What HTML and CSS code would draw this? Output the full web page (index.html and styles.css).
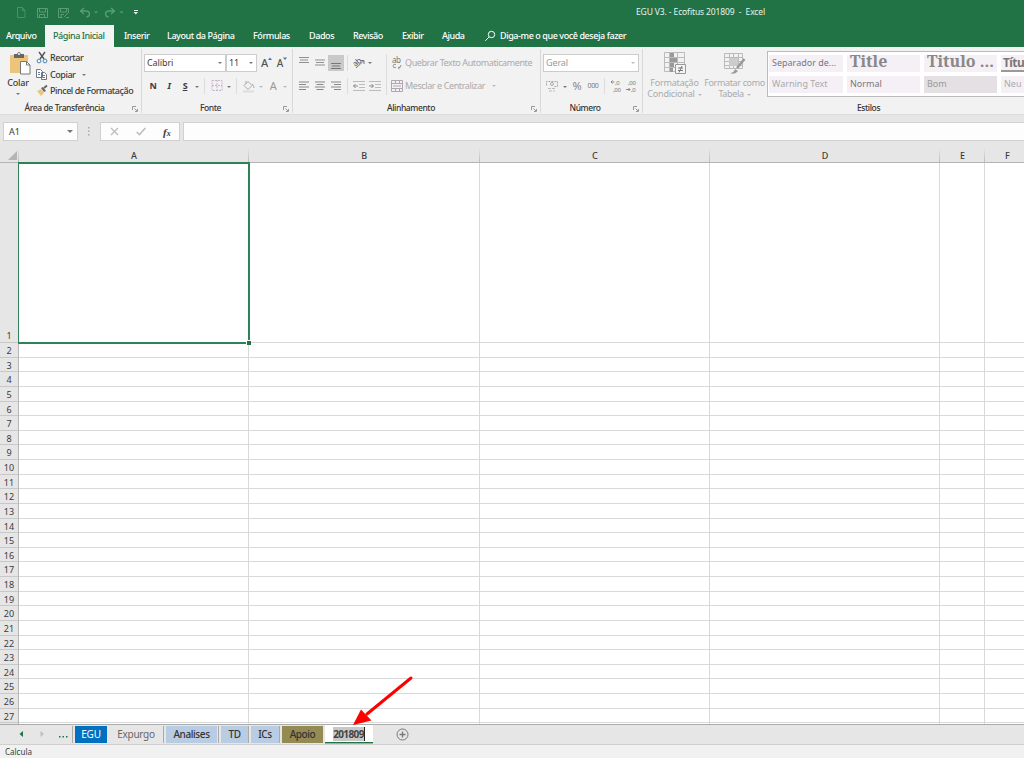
FILE: index.html
```html
<!DOCTYPE html>
<html lang="pt-BR">
<head>
    <meta charset="utf-8">
    <title>EGU V3. - Ecofitus 201809 - Excel</title>
    <link rel="stylesheet" href="styles.css">
</head>
<body>
    <header class="titlebar">
        <svg class="quick" width="145" height="24" fill="none" stroke="#5b9c78">
            <path d="M17.500 7.500h5l2.500 3v7h-7.500zM22.500 7.500v3h2.500" stroke="#4b9069"/>
            <path d="M37.500 8.500h10v9h-10zM39.500 8.500v3.500h6v-3.500M39.500 17.500v-3h5v3"/>
            <path d="M58.500 8.500h10v4M58.500 8.500v9h4M60.500 8.500v3.500h6v-3.500M61 17.500v-3h3M64 17l5-5M66 17.500h3"/>
            <path d="M84 8l-3.500 3 3.500 3M80.500 11h6q3 .5 3 3t-3 3" stroke-width="1.300"/>
            <path d="M111 8l3.500 3-3.500 3M114.500 11h-6q-3 .5-3 3t3 3" stroke-width="1.300"/>
            <path d="M94 11.500h4l-2 2zM119.500 11.500h4l-2 2z" fill="#5b9c78" stroke="none"/>
            <path d="M134 10h4v1h-4zM133.500 12h4.500l-2.200 2.500z" fill="#e3f0e8" stroke="none"/>
        </svg>
        <span class="doc-name">EGU V3. - Ecofitus 201809 &nbsp;- &nbsp;Excel</span>
    </header>

    <nav class="menu">
        <span>Arquivo</span>
        <span class="current">Página Inicial</span>
        <span>Inserir</span>
        <span>Layout da Página</span>
        <span>Fórmulas</span>
        <span>Dados</span>
        <span>Revisão</span>
        <span>Exibir</span>
        <span>Ajuda</span>
        <svg width="12" height="12" fill="none" stroke="#fff"><circle cx="6.500" cy="4.500" r="3.200"/><path d="M4 7L.3 10.800"/></svg>
        <span class="tell">Diga-me o que você deseja fazer</span>
    </nav>

    <section class="ribbon">
        <div class="group clipboard">
            <div class="tools">
                <div class="paste">
                    <svg width="24" height="25">
                        <path d="M1 3h18v18H1z" fill="#edc57a"/>
                        <path d="M5 2h3q2-4 4 0h3v4H5z" fill="#666"/>
                        <circle cx="10" cy="2" r="1" fill="#fff"/>
                        <path d="M11.500 9.500h6l3.500 3.500v9h-9.500z" fill="#fff" stroke="#777"/>
                        <path d="M17.500 9.500v3.500h3.500" fill="none" stroke="#777"/>
                    </svg>
                    <span>Colar</span>
                    <i class="caret"></i>
                </div>
                <ul class="clip-list">
                    <li>
                        <svg width="13" height="12" fill="none"><path d="M3 0l5 7M9 0L4 7" stroke="#555" stroke-width="1.400"/><circle cx="3" cy="9" r="1.900" stroke="#4a86bd"/><circle cx="9" cy="9" r="1.900" stroke="#4a86bd"/></svg>
                        <span>Recortar</span>
                    </li>
                    <li>
                        <svg width="13" height="12" fill="#fff" stroke="#777"><path d="M.5 .5h4l2 2v6h-6zM5.500 3.500h3l2 2v5h-5z"/><path d="M2 3.500h2M2 5.500h2M7 6.500h2M7 8.500h2" stroke="#4a86bd"/></svg>
                        <span>Copiar</span><i class="caret"></i>
                    </li>
                    <li>
                        <svg width="13" height="12"><path d="M1 6l4-2 3 4-3 3z" fill="#edc57a"/><path d="M5 3l2-1 3 4-2 1z" fill="#666"/><path d="M8 3l3-2.500" stroke="#666" stroke-width="2"/></svg>
                        <span>Pincel de Formatação</span>
                    </li>
                </ul>
            </div>
            <footer>Área de Transferência</footer>
            <svg class="launch" width="6" height="6"><use href="#launcher"/></svg>
        </div>

        <div class="group font">
            <div class="line">
                <div class="select name"><span>Calibri</span><i class="caret"></i></div>
                <div class="select size"><span>11</span><i class="caret"></i></div>
                <span class="grow">A</span><svg class="tick" width="5" height="12"><path d="M0 3l2-2.500L4 3z" fill="#3f77b5"/></svg>
                <span class="shrink">A</span><svg class="tick" width="5" height="12"><path d="M0 .5h4L2 3z" fill="#3f77b5"/></svg>
            </div>
            <div class="line second">
                <b class="slot">N</b><b class="slot italic">I</b><b class="slot under">S</b><span class="slot w8"><i class="caret"></i></span>
                <i class="bar"></i>
                <svg class="slot" width="12" height="12" fill="none" stroke="#c9b5cb"><path d="M3 .5h10v10H3zM8 0v11M3 5.500h10" stroke-dasharray="2 1"/></svg>
                <span class="slot w8"><i class="caret"></i></span>
                <i class="bar"></i>
                <svg class="slot" width="16" height="13" fill="none" stroke="#aaa"><path d="M3 5.500l4-4 4 4-4 4zM5 1v3M11 4q2 1 2 4"/><path d="M2 11.500h11" stroke="#e3d9e4" stroke-width="2"/></svg>
                <span class="slot w8 pale"><i class="caret"></i></span>
                <span class="slot glyph-a">A</span>
                <span class="slot w8 pale"><i class="caret"></i></span>
            </div>
            <footer>Fonte</footer>
            <svg class="launch" width="6" height="6"><use href="#launcher"/></svg>
        </div>

        <div class="group align">
            <div class="tools">
                <div class="align-left">
                    <div class="line">
                        <svg class="slot" width="16" height="16" stroke="#909090"><path d="M3 2.500h10M4 5h8M3 7.500h10"/></svg>
                        <svg class="slot" width="16" height="16" stroke="#909090"><path d="M3 5h10M4 7.500h8M3 10h10"/></svg>
                        <svg class="slot on" width="16" height="16" stroke="#777"><path d="M3 8.500h10M4 11h8M3 13.500h10"/></svg>
                        <i class="bar"></i>
                        <svg class="slot orient" width="16" height="14" fill="none" stroke="#777"><path d="M4 12L12 4.500M8.500 4.500h3.500v3.500"/><text x="1" y="9" font-size="8" fill="#555" stroke="none" transform="rotate(-40 5 7)">ab</text></svg>
                        <i class="caret"></i>
                    </div>
                    <div class="line second">
                        <svg class="slot" width="16" height="12" stroke="#888"><path d="M3 2h10M3 4.500h7M3 7h10M3 9.500h7"/></svg>
                        <svg class="slot" width="16" height="12" stroke="#888"><path d="M3 2h10M4.500 4.500h7M3 7h10M4.500 9.500h7"/></svg>
                        <svg class="slot" width="16" height="12" stroke="#888"><path d="M3 2h10M6 4.500h7M3 7h10M6 9.500h7"/></svg>
                        <i class="bar"></i>
                        <svg class="slot" width="16" height="12" stroke="#bbb" fill="none"><path d="M1 1.500h12M7 4.500h6M7 7.500h6M1 10.500h12"/><path d="M6 6H1.500M3.500 4l-2 2 2 2" stroke="#888"/></svg>
                        <svg class="slot" width="16" height="12" stroke="#bbb" fill="none"><path d="M1 1.500h12M7 4.500h6M7 7.500h6M1 10.500h12"/><path d="M1 6h4.500M3.500 4l2 2-2 2" stroke="#888"/></svg>
                    </div>
                </div>
                <div class="align-right">
                    <div class="line">
                        <svg width="13" height="14" fill="none" stroke="#999"><text x="1" y="7" font-size="8" fill="#777" stroke="none">ab</text><path d="M5 8.500q-3-1-3 1.500t3 1.500M7 12q3 0 3-3M8.500 10.500L7 12l1.500 1"/></svg>
                        <span class="wrap-text">Quebrar Texto Automaticamente</span>
                    </div>
                    <div class="line second">
                        <svg width="13" height="13" fill="none" stroke="#b0a5b2"><path d="M.5 .5h11v11H.5zM0 3.500h12M0 8.500h12M4.500 0v3M8.500 0v3M4.500 9v3M8.500 9v3M2 6h8"/></svg>
                        <span class="merge">Mesclar e Centralizar</span><i class="caret pale"></i>
                    </div>
                </div>
            </div>
            <footer>Alinhamento</footer>
            <svg class="launch" width="6" height="6"><use href="#launcher"/></svg>
        </div>

        <div class="group number">
            <div class="line"><div class="select format"><span>Geral</span><i class="caret pale"></i></div></div>
            <div class="line second">
                <svg class="slot" width="14" height="13" fill="none" stroke="#aaa"><path d="M1.500 5.500v-4h11v5h-4" stroke-dasharray="2 1"/><circle cx="7" cy="4" r="1.500"/><path d="M3 8.500h7M4 11h6" stroke="#bbb" stroke-dasharray="3 1"/></svg>
                <span class="slot w8"><i class="caret"></i></span>
                <span class="slot percent">%</span>
                <span class="slot zeros">000</span>
                <i class="bar"></i>
                <svg class="slot" width="16" height="14" fill="#777"><text x="6" y="5.500">,0</text><text x="4" y="13">,00</text><path d="M2 3h3.500M3.500 1.500L2 3l1.500 1.500" stroke="#888" fill="none"/></svg>
                <svg class="slot" width="16" height="14" fill="#777"><text x="3" y="5.500">,00</text><text x="6" y="13">,0</text><path d="M1 10.500h4M3.500 9L5 10.500 3.500 12" stroke="#888" fill="none"/></svg>
            </div>
            <footer>Número</footer>
            <svg class="launch" width="6" height="6"><use href="#launcher"/></svg>
        </div>

        <div class="group styles">
            <div class="tools">
                <div class="big">
                    <svg width="24" height="24" fill="none" stroke="#bbb"><path d="M1.500 1.500h20v19h-20zM1 6.500h20M1 11.500h20M1 16.500h20M6.500 1v20M14.500 1v20"/><path d="M7 2h4v4H7zM7 7h7v4H7zM7 12h4v4H7zM7 17h3v4H7z" fill="#999" stroke="none"/><path d="M12.500 13.500h10v9h-10z" fill="#f5f5f5" stroke="#999"/><path d="M15 17h5M15 19.500h5M19 15l-3 6.500" stroke="#777"/></svg>
                    <span>Formatação</span>
                    <span>Condicional<i class="caret pale"></i></span>
                </div>
                <div class="big table">
                    <svg width="24" height="24" fill="none" stroke="#bbb"><path d="M1.500 2.500h18v15h-18zM1 6.500h18M1 10.500h18M1 14.500h18M6.500 2v15M10.500 2v15M15.500 2v15"/><path d="M6 7h9v8H6z" fill="#ccc" stroke="none"/><path d="M21.500 8L14 17" stroke="#999" stroke-width="2.500"/><path d="M7 22q4 0 5-4l3 2q-3 4-8 2z" fill="#999" stroke="none"/></svg>
                    <span>Formatar como</span>
                    <span>Tabela<i class="caret pale"></i></span>
                </div>
                <div class="gallery">
                    <span class="sep-style">Separador de...</span>
                    <span class="title-style">Title</span>
                    <span class="title-style">Titulo ...</span>
                    <span class="heading">Títu</span>
                    <span class="faint">Warning Text</span>
                    <span>Normal</span>
                    <span class="good">Bom</span>
                    <span class="faint">Neu</span>
                </div>
            </div>
            <footer>Estilos</footer>
        </div>
    </section>

    <section class="formula">
        <div class="box cell-name"><span>A1</span><i class="caret"></i></div>
        <svg class="dots" width="2" height="9" fill="#aaa"><path d="M0 0h1.500v1.500H0zM0 3.500h1.500V5H0zM0 7h1.500v1.500H0z"/></svg>
        <div class="box actions">
            <svg width="9" height="9" stroke="#bbb" stroke-width="1.300"><path d="M1 1l7 7M8 1L1 8"/></svg>
            <svg width="10" height="9" fill="none" stroke="#bbb" stroke-width="1.600"><path d="M.8 5l2.700 2.700L9.300 1"/></svg>
            <em>f<small>x</small></em>
        </div>
        <div class="box input"></div>
    </section>

    <main class="sheet">
        <div class="cols">
            <span class="corner"><svg width="9" height="9"><path d="M9 0v9H0z" fill="#b4b4b4"/></svg></span>
            <span>A</span><span>B</span><span>C</span><span>D</span><span>E</span><span>F</span>
        </div>
        <div class="body">
            <div class="rows" id="rows"></div>
            <div class="cells">
                <div class="column selected"><i class="handle"></i></div>
                <div class="column"></div>
                <div class="column"></div>
                <div class="column"></div>
                <div class="column"></div>
                <div class="column"></div>
            </div>
        </div>
    </main>

    <nav class="tabs">
        <svg class="arrows" width="75" height="19"><path d="M23 6v6l-3.500-3z" fill="#217346"/><path d="M40.500 6v6l3.500-3z" fill="#bfbfbf"/><path d="M59 11h1.500v1.500H59zM62.500 11H64v1.500h-1.500zM66 11h1.500v1.500H66z" fill="#217346"/></svg>
        <span class="tab blue">EGU</span>
        <span class="tab plain">Expurgo</span>
        <span class="tab light">Analises</span>
        <span class="tab light">TD</span>
        <span class="tab light">ICs</span>
        <span class="tab olive">Apoio</span>
        <span class="tab editing"><mark>201809</mark></span>
        <svg class="add" width="13" height="13" fill="none" stroke="#777"><circle cx="6.500" cy="6.500" r="5.500"/><path d="M3.500 6.500h6M6.500 3.500v6" stroke-width="1.300"/></svg>
    </nav>
    <footer class="status">Calcula</footer>

    <svg class="pointer" width="64" height="52">
        <path d="M59 3L15 39" stroke="#fe0000" stroke-width="3" stroke-linecap="round"/>
        <path d="M1 50l8-15.500L19.500 45.500z" fill="#fe0000"/>
    </svg>

    <svg width="0" height="0" class="defs">
        <symbol id="launcher"><path d="M.5 4V.5H4M2.500 2.500L5 5M5.500 3v2.500H3" fill="none" stroke="#999"/></symbol>
    </svg>

    <script>
        var rows = document.getElementById('rows');
        for (var i = 1; i <= 27; i++) {
            var row = document.createElement('span');
            row.textContent = i;
            rows.appendChild(row);
        }
    </script>
</body>
</html>
```

FILE: styles.css
```css
*, *::before {
    box-sizing: border-box;
}
body {
    margin: 0;
    width: 1024px;
    height: 758px;
    overflow: hidden;
    position: relative;
    background: #e6e6e6;
    color: #3c3c3c;
    font: 9px/12px "Noto Sans", "Open Sans", sans-serif;
}
svg {
    display: block;
    flex: none;
    overflow: visible;
}
span {
    white-space: nowrap;
}
ul {
    margin: 0;
    padding: 0;
    list-style: none;
}
.defs {
    position: absolute;
}
.caret {
    display: inline-block;
    flex: none;
    width: 0;
    height: 0;
    border: 2px solid transparent;
    border-top: 2.500px solid #777;
    border-bottom: 0;
}
.pale, .pale .caret {
    border-top-color: #bbb;
}

/* title and menu */
.titlebar {
    height: 25px;
    background: #217346;
    display: flex;
}
.doc-name {
    margin-left: 491px;
    line-height: 24px;
    font-size: 8.500px;
    color: #e8f2ec;
    letter-spacing: -.12px;
}
.menu {
    height: 22px;
    background: #217346;
    color: #fff;
    display: grid;
    grid-template-columns: 39px 79px 43px 86px 56px 44px 49px 40px 43px 15px 1fr;
    padding-left: 6px;
    line-height: 21px;
    font-weight: 500;
    letter-spacing: -.42px;
}
.menu svg {
    margin-top: 5px;
}
.menu .current {
    background: #f3f3f3;
    color: #217346;
    width: 69px;
    padding-left: 8px;
}

/* ribbon */
.ribbon {
    height: 68px;
    background: #f2f2f2;
    border-bottom: 1px solid #dcdcdc;
    display: flex;
    letter-spacing: -.35px;
}
.group {
    position: relative;
    height: 64px;
    margin-top: 2px;
    border-right: 1px solid #d8d8d8;
    flex: none;
}
.group footer {
    position: absolute;
    bottom: -1px;
    width: 100%;
    text-align: center;
    color: #333;
    font-size: 8.500px;
    font-weight: 500;
    letter-spacing: -.4px;
}
.launch {
    position: absolute;
    right: 3px;
    bottom: 1px;
}
.tools, .line {
    display: flex;
}
.line {
    height: 18px;
    align-items: center;
}
.second {
    margin-top: 5px;
}
.slot {
    flex: none;
    width: 16px;
    text-align: center;
    line-height: 12px;
}
.bar {
    width: 1px;
    height: 16px;
    margin: 0 4px 0 3px;
    background: #dcdcdc;
}
.w8 { width: 8px; }
.slot .caret {
    vertical-align: middle;
}
.select {
    height: 18px;
    background: #fff;
    border: 1px solid #ccc;
    display: flex;
    align-items: center;
    justify-content: space-between;
    padding: 0 3px 0 2px;
    letter-spacing: -.1px;
}

.clipboard {
    width: 142px;
    font-weight: 500;
}
.clipboard footer {
    width: 129px;
}
.paste {
    width: 36px;
    padding: 3px 0 0 9px;
    text-align: center;
}
.paste span {
    display: block;
    margin: 0 0 0 -9px;
    letter-spacing: -.2px;
}
.paste .caret {
    display: block;
    margin: 4px 0 0 7px;
}
.clip-list {
    padding-top: 1px;
    letter-spacing: -.46px;
}
.clip-list li {
    height: 16.500px;
    display: flex;
    align-items: center;
}
.clip-list span {
    margin-left: 1px;
}
.clip-list .caret {
    margin-left: 7px;
}

.font {
    width: 151px;
    padding: 5px 0 0 2px;
}
.font .second {
    padding-left: 1px;
}
.font footer {
    width: 137px;
    left: 0;
}
.name { width: 82px; }
.size { width: 31px; }
.grow, .shrink {
    font-size: 11px;
    font-weight: 500;
    margin-left: 4px;
    color: #555;
}
.shrink {
    font-size: 10px;
}
.italic { font-style: italic; }
.under { text-decoration: underline; }
.glyph-a {
    font-size: 11px;
    color: #999;
}

.align {
    width: 248px;
}
.align footer {
    width: 236px;
}
.align-left {
    width: 93px;
    padding: 5px 0 0 3px;
}
.align-right {
    margin-top: 5px;
    height: 41px;
    border-left: 1px solid #dcdcdc;
    padding-left: 4px;
    color: #aaa;
    letter-spacing: -.4px;
}
.align-right span {
    margin-left: 1px;
}
.align-right .caret {
    margin-left: 7px;
}
.on {
    background: #c9c9c9;
}

.number {
    width: 102px;
    padding: 5px 0 0 2px;
}
.number .second {
    padding-left: 2px;
}
.number footer {
    width: 88px;
    left: 0;
}
.format {
    width: 96px;
    color: #999;
}
.percent {
    font-size: 11px;
    color: #888;
}
.zeros {
    font-size: 7px;
    color: #777;
}
.number text {
    font-size: 6px;
    letter-spacing: -.3px;
}

.styles {
    width: 381px;
    border: 0;
}
.styles footer {
    width: 451px;
}
.big {
    width: 63px;
    display: flex;
    flex-direction: column;
    align-items: center;
    padding-top: 2px;
    color: #aaa;
    line-height: 11px;
    letter-spacing: -.2px;
}
.big.table {
    width: 61px;
    margin-left: -2px;
    margin-right: 2px;
    letter-spacing: -.35px;
}
.big svg {
    margin-bottom: 2px;
}
.big .caret {
    margin-left: 3px;
    vertical-align: middle;
}
.gallery {
    margin-top: 2px;
    width: 257px;
    height: 46px;
    border: 1px solid #bbb;
    border-right: 0;
    background: #fff;
    display: grid;
    grid-template: 17px 17px / 74px 73px 73px 1fr;
    gap: 4px;
    padding: 3px 0 3px 1px;
    overflow: hidden;
    letter-spacing: 0;
}
.gallery span {
    background: #f5f0f6;
    padding-left: 3px;
    line-height: 16px;
    color: #777;
}
.gallery .title-style {
    font: bold 16px/13px "Noto Serif", "DejaVu Serif", serif;
    color: #888;
}
.gallery .heading {
    font-size: 12px;
    font-weight: bold;
    letter-spacing: -.6px;
    padding-left: 2px;
    border-bottom: 2px solid #999;
}
.gallery .faint { color: #aaa; }
.gallery .good {
    background: #e4e0e4;
    color: #999;
}

/* formula bar */
.formula {
    height: 31px;
    padding: 7px 0 0 3px;
    display: flex;
}
.box {
    height: 19px;
    background: #fdfdfd;
    border: 1px solid #d0d0d0;
    display: flex;
    align-items: center;
}
.cell-name {
    width: 75px;
    justify-content: space-between;
    padding: 0 4px 0 5px;
}
.dots {
    margin: 5px 10px 0 10px;
}
.cell-name .caret {
    border-width: 3px 3px 0;
}
.actions {
    width: 80px;
    padding-left: 9px;
    gap: 17px;
}
.actions em {
    font: italic bold 11px "Liberation Serif", serif;
}
.actions small {
    font-size: 8px;
}
.input {
    margin-left: 3px;
    flex: 1;
    border-right: 0;
}

/* grid */
.cols {
    height: 17px;
    display: grid;
    grid-template-columns: 19px 230px 230.500px 230.500px 230px 45px 1fr;
    border-bottom: 1px solid #b5b5b5;
}
.cols span {
    text-align: center;
    line-height: 20px;
    font-weight: 500;
    background: linear-gradient(#e6e6e6 2px, #b0b0b0) right / 1px 100% no-repeat;
}
.cols span:last-child {
    background: none;
    padding-left: 6px;
}
.corner svg {
    margin: 5px 0 0 8px;
}
.body {
    height: 561px;
    display: flex;
}
.rows {
    width: 19px;
    border-right: 1px solid #b5b5b5;
}
.rows span {
    display: block;
    height: 14.630px;
    line-height: 15px;
    text-align: center;
    border-bottom: 1px solid #c8c8c8;
}
.rows span:first-child {
    height: 180px;
    padding-top: 165px;
}
.cells {
    flex: 1;
    display: grid;
    grid-template-columns: 230px 230.500px 230.500px 230px 45px 1fr;
    background: #fff repeating-linear-gradient(transparent 0 13.630px, #d9d9d9 13.630px 14.630px) 0 180px;
    background-repeat: no-repeat;
}
.column {
    border-right: 1px solid #d9d9d9;
    background: linear-gradient(#d9d9d9, #d9d9d9) 0 179px / 100% 1px no-repeat;
}
.column:last-child {
    border: 0;
}
.selected {
    position: relative;
}
.selected::before {
    content: "";
    position: absolute;
    left: -1px;
    top: -1px;
    width: 232px;
    height: 182px;
    border: solid #2f8255;
    border-width: 2px 2px 2px 1px;
}
.handle {
    position: absolute;
    left: 227px;
    top: 177px;
    width: 5px;
    height: 5px;
    background: #217346;
    border: solid #fff;
    border-width: 1px 0 0 1px;
}

/* sheet tabs */
.tabs {
    height: 21px;
    border-top: 1px solid #ababab;
    border-bottom: 1px solid #cfcfcf;
    display: flex;
    font-size: 10px;
    line-height: 17px;
    letter-spacing: -.4px;
}
.tab {
    height: 17px;
    margin-top: 1px;
    text-align: center;
    color: #333;
    box-shadow: -2px 0 #e6e6e6, -3px 0 #aaa;
}
.blue {
    width: 32px;
    background: #0070c0;
    color: #fff;
    letter-spacing: -.2px;
}
.plain {
    width: 54px;
    margin-left: 2px;
    color: #666;
    box-shadow: none;
    letter-spacing: -.3px;
}
.light {
    background: #b8cce4;
    width: 51px;
    margin-left: 3px;
    font-weight: 500;
}
.light + .light { width: 27px; margin-left: 4px; }
.light + .light + .light { width: 28px; margin-left: 3px; }
.olive {
    width: 41px;
    margin-left: 3px;
    background: #948a54;
    font-weight: 500;
}
.editing {
    width: 48px;
    height: 18px;
    margin: 0 0 0 2px;
    background: #fff;
    border-bottom: 1.500px solid #217346;
    box-shadow: 0 1px #8fb9a2;
    line-height: 18px;
    font-weight: bold;
    letter-spacing: -.6px;
}
.editing mark {
    background: #c8c8c8;
    color: #444;
    border-right: 1px solid #222;
}
.add {
    margin: 3px 0 0 23px;
}
.status {
    height: 13px;
    background: #f1f1f1;
    padding: 1px 0 0 5px;
    line-height: 12px;
    font-size: 8px;
}
.pointer {
    position: absolute;
    left: 352px;
    top: 675px;
}
```
